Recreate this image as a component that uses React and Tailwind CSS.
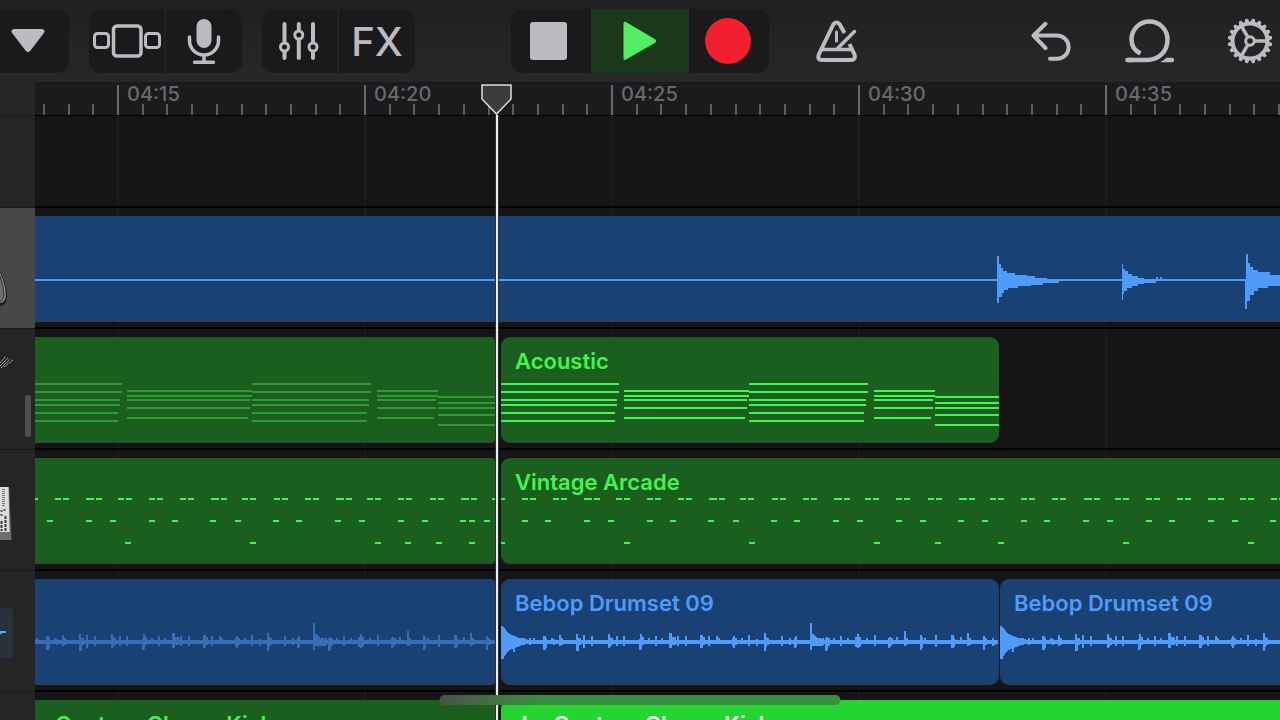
import React, { useState } from "react";
import clsx from "clsx";

const rulerLabels = ["", "04:15", "04:20", "04:25", "04:30", "04:35"];

// chords of the acoustic loop: start x, end x, y of every string
const chords = [
  { from: 0, to: 118, rows: [46, 54, 62, 67, 75, 83] },
  { from: 123, to: 248, rows: [53, 58, 62, 70, 80] },
  { from: 248, to: 367, rows: [46, 54, 62, 67, 75, 83] },
  { from: 373, to: 434, rows: [53, 58, 62, 70, 80] },
  { from: 434, to: 498, rows: [59, 65, 70, 77, 87] },
];

const arcadeMid = [21, 44, 83, 107, 146, 169, 207, 232, 270, 293, 332, 356, 395, 419, 457, 481, 520, 543, 582, 606, 645, 668, 707, 731, 769];

// drum hits: x, height above the centre, height below it
const drumHits = [
  [0, 16, 17], [1, 15, 17], [2, 14, 14], [3, 13, 13], [4, 11, 11], [5, 10, 10], [6, 9, 9], [7, 8, 8], [8, 8, 8], [9, 7, 7],
  [10, 7, 7], [11, 6, 6], [12, 6, 10], [13, 6, 6], [14, 5, 5], [15, 5, 5], [16, 4, 5], [17, 4, 4], [18, 4, 4], [19, 4, 3],
  [20, 4, 3], [22, 4, 3], [24, 3, 2], [28, 4, 3], [32, 4, 2], [42, 6, 8], [43, 6, 8], [44, 4, 6], [50, 4, 2], [52, 3, 3],
  [58, 7, 4], [60, 4, 3], [75, 8, 9], [76, 4, 9], [78, 4, 3], [82, 7, 6], [90, 6, 4], [107, 8, 6], [108, 5, 5], [110, 4, 3],
  [115, 6, 4], [122, 6, 4], [138, 3, 8], [139, 8, 7], [141, 5, 3], [147, 4, 2], [154, 6, 4], [160, 4, 2], [168, 9, 6],
  [169, 9, 6], [171, 5, 3], [173, 5, 3], [176, 6, 4], [184, 6, 4], [199, 7, 6], [200, 7, 6], [202, 5, 3], [207, 6, 4],
  [215, 6, 2], [217, 4, 2], [231, 4, 4], [232, 6, 6], [234, 4, 3], [240, 4, 2], [247, 7, 4], [255, 3, 4], [263, 9, 9],
  [264, 5, 5], [266, 4, 3], [280, 6, 4], [288, 4, 3], [293, 4, 6], [294, 6, 5], [309, 19, 8], [311, 8, 4], [312, 7, 4],
  [313, 6, 4], [314, 5, 4], [316, 4, 4], [318, 4, 4], [320, 3, 4], [321, 4, 3], [324, 4, 9], [325, 5, 8], [327, 4, 4],
  [332, 4, 2], [339, 6, 4], [346, 4, 2], [354, 5, 5], [356, 8, 6], [358, 5, 5], [365, 4, 2], [373, 7, 4], [387, 4, 6],
  [388, 5, 5], [390, 4, 3], [395, 5, 2], [403, 11, 4], [405, 4, 3], [419, 7, 8], [420, 5, 6], [423, 4, 2], [434, 7, 5],
  [450, 7, 6], [451, 7, 6], [452, 4, 5], [459, 5, 2], [466, 9, 4], [468, 4, 3], [482, 6, 8], [484, 4, 3], [491, 4, 4], [493, 2, 3],
];

const guitarHits = [
  "M962 40h2v8h2v4h2v3h4v2h8v2h12v1h8v2h12v3h12v2h-16v2h-12v1h-13v2h-10v2h-4v3h-2v4h-3v6h-2z",
  "M1087 48h1v5h2v2h3v3h4v2h6v2h6v3h12v2h-12v1h-6v2h-6v2h-5v3h-3v3h-1v6h-1z",
  "M1211 38h2v9h2v4h3v3h5v2h12v3h10v3h10v6h-10v2h-12v2h-10v3h-4v4h-4v6h-3v8h-2z",
];

function Chords({ offset = 0 }) {
  return (
    <g transform={`translate(${-offset} 0)`} fill="currentColor">
      {chords.map((c) =>
        c.rows.map((y, i) => (
          <rect key={`${c.from}-${y}`} x={c.from} y={y} width={c.to - c.from - (c.to === 498 ? 0 : Math.floor(i / 2) * 2)} height="2" />
        ))
      )}
    </g>
  );
}

function Arcade({ offset = 0, low, extra = [] }) {
  const pairs = Array.from({ length: 25 }, (_, i) => ({ x: Math.round(21 + 31.2 * i), wide: i % 4 === 2 }));
  return (
    <g transform={`translate(${-offset} 0)`} fill="currentColor">
      <rect x="0" y="40" width="4" height="2" />
      {pairs.map(({ x, wide }) => (
        <React.Fragment key={x}>
          <rect x={x} y="40" width={wide ? 8 : 6} height="2" />
          <rect x={x + (wide ? 10 : 8)} y="40" width="6" height="2" />
        </React.Fragment>
      ))}
      {[...arcadeMid, ...extra].map((x) => (
        <rect key={x} x={x} y="62" width="6" height="2" />
      ))}
      {low.map((x) => (
        <rect key={x} x={x} y="84" width={x === 0 ? 4 : 6} height="2" />
      ))}
    </g>
  );
}

function Drums({ offset = 0 }) {
  return (
    <g transform={`translate(${-offset} 0)`} fill="currentColor">
      <rect x="0" y="61" width="497" height="4" />
      {drumHits.map(([x, up, down]) => (
        <rect key={x} x={x} y={63 - up} width="2" height={up + down} />
      ))}
    </g>
  );
}

function Guitar() {
  return (
    <g fill="currentColor">
      <rect x="0" y="63" width="100%" height="2" />
      {guitarHits.map((d) => (
        <path key={d} d={d} />
      ))}
      <path d="M1121 61h2v2h-2zM1125 61h2v2h-2z" />
    </g>
  );
}

function Region({ name, className, children }) {
  return (
    <div className={clsx("relative h-[106px] overflow-hidden border-b border-[#3c4044]", className)}>
      <svg className="absolute inset-0 h-full w-full" shapeRendering="crispEdges" aria-hidden="true">
        {children}
      </svg>
      {name && <p className="relative px-[14px] pt-[10px] text-[22px] leading-[28px] font-semibold whitespace-nowrap">{name}</p>}
    </div>
  );
}

function Track({ label, icon, selected, onSelect, children }) {
  return (
    <div className="flex h-[121px] shrink-0">
      <button
        type="button"
        aria-label={label}
        aria-pressed={selected}
        onClick={onSelect}
        className={clsx("flex w-[35px] shrink-0 items-center border-b border-[#1a1a1c]", selected ? "bg-[#48484b]" : "bg-[#252528]")}
      >
        {icon}
      </button>
      <div className="flex min-w-0 flex-1 border-b-2 border-black pt-2">{children}</div>
    </div>
  );
}

function ToolButton({ label, className, children }) {
  return (
    <button type="button" aria-label={label} className={clsx("flex h-16 items-center justify-center", className)}>
      {children}
    </button>
  );
}

function GearIcon() {
  const teeth = Array.from({ length: 20 }, (_, i) => i * 18 + 9);
  return (
    <svg width="46" height="46" viewBox="-23 -23 46 46" fill="none" stroke="currentColor">
      {teeth.map((a) => (
        <path key={a} d="M18 -2.6L22 -1.500Q22.8 0 22 1.500L18 2.600z" fill="currentColor" stroke="none" transform={`rotate(${a})`} />
      ))}
      <circle r="17.5" strokeWidth="4" />
      <circle r="4.3" strokeWidth="3" />
      {[0, 120, 240].map((a) => (
        <path key={a} d="M5 0H17" strokeWidth="3.500" transform={`rotate(${a})`} />
      ))}
    </svg>
  );
}

function Toolbar() {
  return (
    <header className="grid h-[82px] shrink-0 grid-cols-[1fr_auto_1fr] items-center bg-linear-to-b from-[#212123] to-[#262729] text-[#bdbbbf]">
      <div className="flex gap-5">
        <ToolButton label="Browser" className="w-[69px] rounded-r-xl bg-[#1a1a1c] pr-[13px]">
          <svg width="34" height="24" viewBox="0 0 34 24" fill="currentColor">
            <path d="M3 0H31Q35 1 32.5 4.500L19.500 21.500Q17 24.500 14.500 21.500L1.500 4.500Q-1 1 3 0z" />
          </svg>
        </ToolButton>
        <div className="flex gap-[2px] overflow-hidden rounded-xl bg-[#222224]">
          <ToolButton label="Tracks view" className="w-[75px] bg-[#1a1a1c]">
            <svg width="68" height="34" viewBox="0 0 68 34" fill="none" stroke="currentColor" strokeWidth="3">
              <rect x="1.500" y="9.500" width="14" height="14" rx="3" />
              <rect x="20.500" y="2" width="27.500" height="30" rx="3.500" strokeWidth="3.500" />
              <rect x="52.500" y="9.500" width="14" height="14" rx="3" />
            </svg>
          </ToolButton>
          <ToolButton label="Instrument" className="w-[76px] bg-[#1a1a1c]">
            <svg width="34" height="46" viewBox="0 0 34 46" fill="none" stroke="currentColor" strokeWidth="3.500" strokeLinecap="round">
              <rect x="9.500" y="1" width="15" height="29" rx="7.500" fill="currentColor" stroke="none" />
              <path d="M2.500 19V22.500A14.500 14.500 0 0 0 31.500 22.500V19M17 37V44M7.500 44.200H26.500" />
            </svg>
          </ToolButton>
        </div>
        <div className="flex gap-[2px] overflow-hidden rounded-xl bg-[#222224]">
          <ToolButton label="Track controls" className="w-[75px] bg-[#1a1a1c] pr-[2px]">
            <svg width="40" height="38" viewBox="0 0 40 38" fill="none" stroke="currentColor" strokeWidth="4" strokeLinecap="round">
              <path d="M5.500 2V20M5.500 30V36M19.800 2V8M19.800 18V36M34 2V20M34 30V36" />
              <circle cx="5.500" cy="25" r="4" strokeWidth="3" />
              <circle cx="19.800" cy="13" r="4" strokeWidth="3" />
              <circle cx="34" cy="25" r="4" strokeWidth="3" />
            </svg>
          </ToolButton>
          <ToolButton label="FX" className="w-[76px] bg-[#1a1a1c] pt-[2px] text-[40px] leading-none font-medium">
            FX
          </ToolButton>
        </div>
      </div>

      {/* Transport */}
      <div className="flex overflow-hidden rounded-xl bg-[#1a1a1c]">
        <ToolButton label="Stop" className="w-[80px] pr-[5px]">
          <svg width="37" height="38" viewBox="0 0 37 38" fill="currentColor">
            <rect width="37" height="38" rx="3" />
          </svg>
        </ToolButton>
        <ToolButton label="Play" className="w-[98px] bg-[#1b381c] text-[#50ee60]">
          <svg width="34" height="40" viewBox="0 0 34 40" fill="currentColor">
            <path d="M0.500 2Q1 0 3 1L32.500 18.500Q34 20 32.500 21.500L3 38.500Q1 39.500 0.500 38z" />
          </svg>
        </ToolButton>
        <ToolButton label="Record" className="w-[80px] pr-[2px] text-[#f2202f]">
          <svg width="46" height="46" viewBox="0 0 46 46" fill="currentColor">
            <circle cx="23" cy="23" r="23" />
          </svg>
        </ToolButton>
      </div>

      <div className="flex items-center gap-[52px] pr-[7px] pl-[47px]">
        <ToolButton label="Metronome">
          <svg width="42" height="42" viewBox="0 0 42 42" fill="none" stroke="currentColor" strokeWidth="4" strokeLinejoin="round">
            <path d="M28.500 13L23.500 4Q20.500 0.800 17.500 4L2.800 34.500Q1 40 6 40H35Q40 40 38.500 34.500L33.500 24" />
            <path d="M4 29.500H37" strokeWidth="3.500" />
            <path d="M20.500 12V21" strokeWidth="3" strokeLinecap="round" />
            <path d="M38.500 11.500L22 28" strokeWidth="3.500" strokeLinecap="round" />
          </svg>
        </ToolButton>
        <ToolButton label="Undo" className="ml-auto">
          <svg width="42" height="40" viewBox="0 0 42 40" fill="none" stroke="currentColor" strokeWidth="4" strokeLinecap="round" strokeLinejoin="round">
            <path d="M14.500 2.800L2.500 14.500L14.500 27M3 14.500H26A11.500 11.500 0 0 1 26 37.800H19" />
          </svg>
        </ToolButton>
        <ToolButton label="Loops">
          <svg width="50" height="44" viewBox="0 0 50 44" fill="none" stroke="currentColor" strokeWidth="4.500">
            <path d="M15.500 34.500C9.500 31.500 6.500 26 6.500 20.500A18 18 0 0 1 42.500 20.500C42.500 33 33.500 41 21.500 41H2.500" />
            <path d="M2.500 41H8" strokeLinecap="round" />
            <path d="M35 43.200Q39 41.500 41.500 38.800H47A2.200 2.200 0 0 1 47 43.200z" fill="currentColor" stroke="none" />
          </svg>
        </ToolButton>
        <ToolButton label="Settings">
          <GearIcon />
        </ToolButton>
      </div>
    </header>
  );
}

function Ruler() {
  return (
    <div className="flex h-[34px] shrink-0">
      <div className="w-[35px] shrink-0 border-b border-[#1a1a1c] bg-[#252528]" />
      <div className="flex min-w-0 flex-1 overflow-hidden border-b border-black bg-[#1b1b1d]">
        <div className="-ml-[165px] flex pt-[3px]">
          {rulerLabels.map((label) => (
            <div key={label} className="relative grid w-[247px] shrink-0 grid-cols-10 items-end">
              {Array.from({ length: 10 }, (_, i) => (
                <div key={i} className={clsx("border-l-2", i === 0 ? "h-[30px] border-[#68686b]" : "h-[11px] border-[#5e5e61]")} />
              ))}
              {label && <span className="absolute top-px left-[10px] text-[20px] leading-[16px] font-medium text-[#69696d]">{label}</span>}
            </div>
          ))}
        </div>
      </div>
    </div>
  );
}

function GuitarIcon() {
  return (
    <svg className="mt-[42px]" width="8" height="36" viewBox="0 0 8 36">
      <path d="M0 1Q7 13 7 26Q6 35 0 35z" fill="#1c1c1d" />
      <path d="M0 2Q5.800 14 5.800 25Q5 32 0 32z" fill="#9a9a9c" />
      <path d="M0 5Q4 15 4 24Q3.500 30 0 31" fill="#6e6e70" stroke="#2a2a2b" />
    </svg>
  );
}

function StringsIcon() {
  return (
    <svg className="mb-[54px]" width="14" height="14" viewBox="0 0 14 14" stroke="#c4bfb2" strokeWidth="1" strokeDasharray="2 1">
      <path d="M0 8L6 1M0 11L8 3M1 13L10 4M4 12L13 5" />
    </svg>
  );
}

function SynthIcon() {
  return (
    <svg className="mt-2" width="12" height="56" viewBox="0 0 12 56">
      <path d="M0 1H9L11.500 54H0z" fill="#6d6d6d" />
      <path d="M0 1H8.500L9.500 46H0z" fill="#dcdcd8" />
      <path d="M3.500 3V20" stroke="#77777a" strokeWidth="3" strokeDasharray="1 1" />
      <path d="M1.500 24V32M4.500 23V27" stroke="#555" strokeWidth="2" strokeDasharray="2 2" />
      <path d="M1.500 35V45M5.500 30V45" stroke="#3a3a3a" strokeWidth="2" strokeDasharray="3 1" />
    </svg>
  );
}

function DrumIcon() {
  return (
    <svg className="mt-1" width="13" height="50" viewBox="0 0 13 50">
      <path d="M0 0H10Q13 0 13 3V47Q13 50 10 50H0z" fill="#28313c" />
      <path d="M0 26L1 24H6" stroke="#5cb0f0" strokeWidth="2" fill="none" />
    </svg>
  );
}

export default function App() {
  const [selected, setSelected] = useState("guitar");
  const trackProps = (id) => ({ selected: selected === id, onSelect: () => setSelected(id) });

  return (
    <div className="flex h-screen flex-col overflow-hidden bg-[#151517] font-['Inter',sans-serif]">
      <Toolbar />

      <main className="relative isolate flex flex-1 flex-col overflow-hidden">
        {/* Bar lines behind the lanes */}
        <div className="absolute inset-y-0 right-0 left-[35px] -z-10 overflow-hidden">
          <div className="-ml-[165px] flex h-full">
            {rulerLabels.map((label) => (
              <div key={label} className="w-[247px] shrink-0 border-l-2 border-[#1c1c1e]" />
            ))}
          </div>
        </div>

        <Ruler />

        <div className="flex h-[92px] shrink-0">
          <div className="w-[35px] shrink-0 border-b border-[#1a1a1c] bg-[#252528]" />
          <div className="flex-1 border-b-2 border-black" />
        </div>

        <Track label="Guitar" icon={<GuitarIcon />} {...trackProps("guitar")}>
          <Region className="flex-1 bg-[#1a4173] text-[#4f9bfb]">
            <Guitar />
          </Region>
        </Track>

        <Track label="Acoustic" icon={<StringsIcon />} {...trackProps("acoustic")}>
          <Region className="w-[460px] shrink-0 rounded-r-sm bg-[#1a5f1e] text-[#309a37]">
            <Chords offset={31} />
          </Region>
          <Region name="Acoustic" className="ml-[6px] w-[498px] shrink-0 rounded-[9px] bg-[#1a5f1e] text-[#42f553]">
            <Chords />
          </Region>
        </Track>

        <Track label="Vintage Arcade" icon={<SynthIcon />} {...trackProps("arcade")}>
          <Region className="w-[460px] shrink-0 rounded-r-sm bg-[#1a5f1e] text-[#42f553]">
            <Arcade offset={32} low={[122, 247, 372, 402, 433, 466]} extra={[466]} />
          </Region>
          <Region name="Vintage Arcade" className="ml-[6px] flex-1 rounded-l-[9px] bg-[#1a5f1e] text-[#42f553]">
            <Arcade low={[0, 123, 248, 373, 434, 497, 622, 747]} />
          </Region>
        </Track>

        <Track label="Bebop Drumset" icon={<DrumIcon />} {...trackProps("drums")}>
          <Region className="w-[460px] shrink-0 rounded-r-sm bg-[#1a4173] text-[#376eb8]">
            <Drums offset={31} />
          </Region>
          <Region name="Bebop Drumset 09" className="ml-[6px] w-[498px] shrink-0 rounded-[9px] bg-[#1a4173] text-[#4f9bfb]">
            <Drums />
          </Region>
          <Region name="Bebop Drumset 09" className="ml-px flex-1 rounded-l-[9px] bg-[#1a4173] text-[#4f9bfb]">
            <Drums />
          </Region>
        </Track>

        <Track label="Kick" {...trackProps("kick")}>
          <Region className="w-[460px] shrink-0 bg-[#1a5f1e] text-[#42f553]">
            <text x="-18" y="32" className="fill-current text-[22px] font-semibold">
              Jo. Century Clones Kick
            </text>
          </Region>
          <Region name="Jo. Century Clones Kick" className="ml-[6px] flex-1 rounded-l-[9px] bg-[#24d430] text-white" />
        </Track>

        {/* Playhead */}
        <div className="absolute inset-y-0 left-[481px] flex w-[31px] flex-col items-center pt-[2px]">
          <svg className="shrink-0" width="31" height="31" viewBox="0 0 31 31">
            <path d="M1 1H30V15L15.500 30L1 15z" fill="#3c3c3f" stroke="#dddddf" strokeWidth="1.500" />
          </svg>
          <div className="box-content w-[2px] flex-1 border-x border-black/80 bg-[#ececee]" />
        </div>

        {/* Scroll indicators */}
        <div className="absolute top-[313px] left-[25px] h-[42px] w-[6px] rounded-full bg-[#505053]" />
        <div className="absolute bottom-[15px] left-1/2 h-[10px] w-[401px] -translate-x-1/2 rounded-full bg-linear-to-r from-[#465246] via-[#3a8d3e] via-25% to-[#3a8d3e]" />
      </main>
    </div>
  );
}
